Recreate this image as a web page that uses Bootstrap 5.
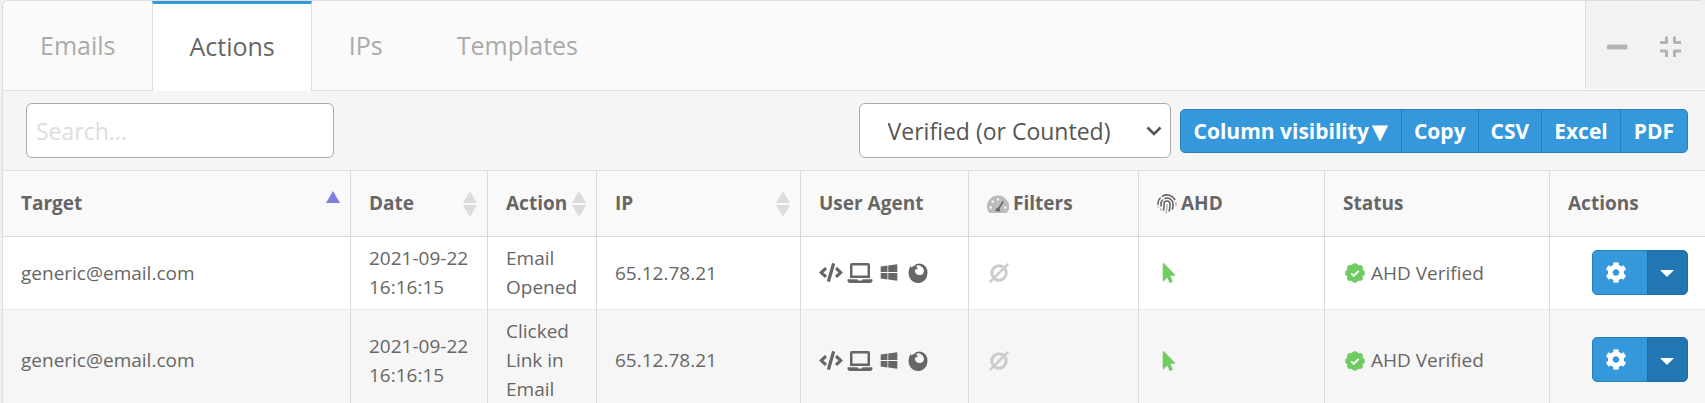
<!DOCTYPE html>
<html lang="en">
<head>
<meta charset="utf-8">
<meta name="viewport" content="width=device-width, initial-scale=1">
<title>Actions</title>
<link href="https://cdn.jsdelivr.net/npm/bootstrap@5.3.0/dist/css/bootstrap.min.css" rel="stylesheet">
<style>
  body { background: #f0f0f0; color: #666; font-family: "Open Sans", sans-serif; font-size: 19px; line-height: 29px; }
  .panel { margin-left: 2px; border: 1px solid #ddd; border-right: 0; border-radius: 6px 6px 0 0; background: #f5f5f5; overflow: hidden; }
  .panel-top { background: #fafafa; border-bottom: 1px solid #ddd; }
  .panel-tabs { --bs-nav-link-color: #aaa; --bs-nav-link-hover-color: #666; margin-bottom: -1px; }
  .panel-tabs .nav-link { height: 90px; padding: 0 37px; font-size: 25px; line-height: 88px; border: 0 solid #ddd; }
  .panel-tabs .nav-link.active { color: #666; background: #fff; border-width: 3px 1px 0; border-top-color: #3498db; padding: 0 36px; line-height: 84px; }
  .panel-tools { background: #f2f2f2; border-left: 1px solid #ddd; color: #b4b4b4; gap: 32px; padding: 3px 24px 0 21px; margin-bottom: 1px; }
  .tool { background: none; border: 0; padding: 0; line-height: 1; color: inherit; }
  .toolbar { padding: 12px 17px 12px 23px; gap: 9px; border-bottom: 1px solid #ddd; }
  .search-box, .filter-box { border: 1px solid #aaa; border-radius: 6px; height: 55px; background-color: #fff; }
  .search-box { width: 308px; padding: 0 9px; font-size: 23px; }
  .search-box::placeholder { color: #ddd; }
  .filter-box { width: 312px; padding: 2px 40px 0 28px; font-size: 23px; color: #555;
    background-image: url("data:image/svg+xml,%3Csvg xmlns='http://www.w3.org/2000/svg' viewBox='0 0 16 10'%3E%3Cpath d='M1.5 1.5 8 8l6.500-6.500' fill='none' stroke='%23555' stroke-width='2.600'/%3E%3C/svg%3E");
    background-size: 16px 10px; background-position: right 8px center; }
  .btn-main { --bs-btn-color: #fff; --bs-btn-bg: #3498db; --bs-btn-border-color: #2980b9; --bs-btn-hover-color: #fff; --bs-btn-hover-bg: #2a8bcb; --bs-btn-hover-border-color: #2980b9; --bs-btn-border-radius: 5px; }
  .export .btn { --bs-btn-padding-x: 12px; --bs-btn-padding-y: 0; --bs-btn-font-size: 21px; --bs-btn-font-weight: 700; --bs-btn-line-height: 42px; }
  .export .btn:first-child, .export .btn:last-child { --bs-btn-padding-x: 13px; }
  .arrow { font-family: "DejaVu Sans", sans-serif; line-height: 1; margin-left: 3px; }
  .log { table-layout: fixed; min-width: 1500px; border-collapse: separate; border-spacing: 0; }
  .log th, .log td { padding: 7px 16px 7px 18px; border-right: 1px solid #d9d9d9; border-bottom: 1px solid #ebebeb; vertical-align: middle; }
  .log th:last-child, .log td:last-child { border-right: 0; padding-right: 17px; }
  .log td:last-child { padding-bottom: 9px; }
  .log th { height: 66px; background: #f9f9f9; border-bottom-color: #d9d9d9; padding-right: 10px; white-space: nowrap; }
  .log th .icon-label { gap: 4px; }
  .log tbody tr { background: #fff; }
  .log tbody tr:nth-child(even) { background: #f6f6f6; }
  .w-date { width: 137px } .w-action { width: 109px } .w-ip { width: 204px } .w-agent { width: 168px }
  .w-filters { width: 170px } .w-ahd { width: 186px } .w-status { width: 225px } .w-menu { width: 155px }
  .agents { gap: 4px; }
  .ok { color: #6fcb62; }
  .row-menu { vertical-align: top; }
  .row-menu .btn { --bs-btn-padding-y: 0; --bs-btn-padding-x: 13px; height: 45px; }
  .row-menu .btn:first-child { width: 56px; }
  .row-menu .btn:last-child { --bs-btn-bg: #2176b3; --bs-btn-border-color: #1f6da5; --bs-btn-padding-x: 12px; width: 41px; }
  svg { display: block; fill: currentColor; flex: none; }
</style>
</head>
<body>
<svg width="0" height="0" class="position-absolute" aria-hidden="true">
  <symbol id="code" viewBox="0 0 640 512"><path d="M278.9 511.5l-61-17.7c-6.4-1.8-10-8.5-8.2-14.9L346.2 8.7c1.8-6.4 8.5-10 14.9-8.2l61 17.7c6.4 1.8 10 8.5 8.2 14.9L293.8 503.3c-1.9 6.4-8.5 10.1-14.9 8.2zm-114-112.2l43.5-46.4c4.6-4.9 4.3-12.7-.8-17.2L117 256l90.6-79.7c5.1-4.5 5.5-12.3.8-17.2l-43.5-46.4c-4.5-4.8-12.1-5.1-17-.5L3.8 247.2c-5.1 4.7-5.1 12.8 0 17.5l144.1 135.1c4.9 4.6 12.5 4.4 17-.5zm327.2.6l144.1-135.1c5.1-4.7 5.1-12.8 0-17.5L492.1 112.1c-4.8-4.5-12.4-4.3-17 .5L431.6 159c-4.6 4.9-4.3 12.7.8 17.2L523 256l-90.6 79.7c-5.1 4.5-5.5 12.3-.8 17.2l43.5 46.4c4.5 4.9 12.1 5.1 17 .6z"/></symbol>
  <symbol id="laptop" viewBox="0 0 640 512"><path d="M624 416H381.540c-.74 19.810-14.710 32-32.740 32H288c-18.690 0-33.020-17.470-32.770-32H16c-8.800 0-16 7.200-16 16v16c0 35.200 28.800 64 64 64h512c35.200 0 64-28.800 64-64v-16c0-8.800-7.200-16-16-16zM576 48c0-26.400-21.600-48-48-48H112C85.600 0 64 21.600 64 48v336h512V48zm-64 272H128V64h384v256z"/></symbol>
  <symbol id="windows" viewBox="0 0 448 512"><path d="M0 93.700l183.600-25.300v177.400H0V93.700zm0 324.600l183.600 25.300V268.400H0v149.900zm203.800 28L448 480V268.400H203.800v177.900zm0-380.600v180.100H448V32L203.800 65.700z"/></symbol>
  <symbol id="firefox" viewBox="0 0 20 20"><path fill-rule="evenodd" d="M2.700 2.700 3.300 4.400Q4.600 3.200 6.200 2.900C7.600 1.300 9.500.5 11.500.5Q16.200 1 18.200 4.400Q20 7.500 19.400 11A9.400 9.400 0 0 1 .6 10.300C.5 7.300 1.500 4.500 2.700 2.700zM10.400 5.200Q9.100 5.200 8.500 6.200L7.100 6.500Q6.700 7.500 7 8.600Q7.800 11.900 11 12.100C14.100 12.200 16 10.200 15.900 7.700C15.700 5 13.700 2.700 10.600 2.200C9.600 2.200 8.800 2.700 8.300 3.400C8.900 4.600 9.800 4.500 10.400 5.200z"/></symbol>
  <symbol id="empty" viewBox="0 0 20 20"><circle cx="10" cy="10" r="7.200" fill="none" stroke="currentColor" stroke-width="3"/><path d="M1.600 18.400 18.400 1.600" stroke="currentColor" stroke-width="2.600" stroke-linecap="round"/></symbol>
  <symbol id="pointer" viewBox="0 0 320 512"><path d="M302.189 329.126H196.105l55.831 135.993c3.889 9.428-.555 19.999-9.444 23.999l-49.165 21.427c-9.165 4-19.443-.571-23.332-9.714l-53.053-129.136-86.664 89.138C18.729 472.710 0 463.554 0 447.977V18.299C0 1.899 19.921-6.096 30.277 5.443l284.412 292.542c11.472 11.179 3.007 31.141-12.500 31.141z"/></symbol>
  <symbol id="verified" viewBox="0 0 20 20"><circle cx="10" cy="10" r="8"/><circle cx="10" cy="3.400" r="3.200"/><circle cx="14.700" cy="5.300" r="3.200"/><circle cx="16.600" cy="10" r="3.200"/><circle cx="14.700" cy="14.700" r="3.200"/><circle cx="10" cy="16.600" r="3.200"/><circle cx="5.300" cy="14.700" r="3.200"/><circle cx="3.400" cy="10" r="3.200"/><circle cx="5.300" cy="5.300" r="3.200"/><path d="m6.200 10.400 2.500 2.400 5-5" fill="none" stroke="#fff" stroke-width="1.900"/></symbol>
  <symbol id="cog" viewBox="16 8 480 496"><path d="M487.400 315.700l-42.600-24.600c4.300-23.200 4.300-47 0-70.200l42.600-24.600c4.900-2.800 7.100-8.600 5.500-14-11.100-35.600-30-67.800-54.700-94.600-3.800-4.100-10-5.100-14.800-2.300L380.800 110c-17.900-15.400-38.500-27.300-60.800-35.100V25.800c0-5.600-3.900-10.500-9.400-11.700-36.700-8.200-74.300-7.800-109.200 0-5.500 1.200-9.400 6.100-9.400 11.700V75c-22.200 7.900-42.800 19.800-60.800 35.100L88.700 85.500c-4.900-2.800-11-1.900-14.800 2.300-24.700 26.700-43.600 58.900-54.700 94.600-1.700 5.400.6 11.200 5.500 14L67.300 221c-4.300 23.200-4.300 47 0 70.200l-42.600 24.600c-4.900 2.800-7.100 8.600-5.500 14 11.100 35.600 30 67.800 54.700 94.600 3.800 4.100 10 5.100 14.800 2.300l42.600-24.600c17.900 15.400 38.500 27.300 60.800 35.100v49.200c0 5.600 3.900 10.500 9.400 11.700 36.700 8.200 74.300 7.800 109.200 0 5.500-1.200 9.400-6.100 9.400-11.700v-49.200c22.200-7.900 42.800-19.800 60.800-35.100l42.600 24.600c4.900 2.800 11 1.900 14.800-2.300 24.700-26.700 43.600-58.900 54.700-94.600 1.500-5.500-.7-11.300-5.600-14.100zM256 336c-44.100 0-80-35.900-80-80s35.900-80 80-80 80 35.900 80 80-35.900 80-80 80z"/></symbol>
  <symbol id="sort" viewBox="0 0 14 28"><path d="M7 1l7 12H0zM0 15h14L7 27z" fill="#dcdcdc"/></symbol>
  <symbol id="sort-up" viewBox="0 0 14 28"><path d="M7 1l7 12H0z" fill="#7b80e0"/></symbol>
</svg>

<main class="panel">
  <header class="panel-top d-flex">
    <ul class="nav panel-tabs flex-grow-1">
      <li class="nav-item"><a class="nav-link" href="#emails">Emails</a></li>
      <li class="nav-item"><a class="nav-link active" aria-current="page" href="#actions">Actions</a></li>
      <li class="nav-item"><a class="nav-link" href="#ips">IPs</a></li>
      <li class="nav-item"><a class="nav-link" href="#templates">Templates</a></li>
    </ul>
    <div class="panel-tools d-flex align-items-center">
      <button class="tool" type="button" aria-label="Collapse"><svg width="21" height="22" viewBox="0 0 21 22"><rect y="8.500" width="20.500" height="5" rx="1.500"/></svg></button>
      <button class="tool" type="button" aria-label="Exit full screen"><svg width="21" height="22" viewBox="0 0 21 22"><path d="M0 6.500h6.500V.5M14.500.5v6H21M0 15h6.500v6M14.500 21v-6H21" fill="none" stroke="currentColor" stroke-width="3" stroke-linejoin="round"/></svg></button>
    </div>
  </header>

  <div class="toolbar d-flex align-items-center flex-wrap">
    <input type="search" class="form-control search-box me-auto" placeholder="Search..." aria-label="Search">
    <select class="form-select filter-box" aria-label="Status filter"><option>Verified (or Counted)</option></select>
    <div class="btn-group export">
      <button type="button" class="btn btn-main">Column visibility<span class="arrow">▼</span></button>
      <button type="button" class="btn btn-main">Copy</button>
      <button type="button" class="btn btn-main">CSV</button>
      <button type="button" class="btn btn-main">Excel</button>
      <button type="button" class="btn btn-main">PDF</button>
    </div>
  </div>

  <table class="log w-100">
    <colgroup><col><col class="w-date"><col class="w-action"><col class="w-ip"><col class="w-agent"><col class="w-filters"><col class="w-ahd"><col class="w-status"><col class="w-menu"></colgroup>
    <thead>
      <tr>
        <th scope="col" aria-sort="ascending"><div class="d-flex justify-content-between align-items-center">Target<svg width="14" height="28"><use href="#sort-up"/></svg></div></th>
        <th scope="col"><div class="d-flex justify-content-between align-items-center">Date<svg width="14" height="28"><use href="#sort"/></svg></div></th>
        <th scope="col"><div class="d-flex justify-content-between align-items-center">Action<svg width="14" height="28"><use href="#sort"/></svg></div></th>
        <th scope="col"><div class="d-flex justify-content-between align-items-center">IP<svg width="14" height="28"><use href="#sort"/></svg></div></th>
        <th scope="col">User Agent</th>
        <th scope="col"><div class="d-flex align-items-center icon-label"><svg width="22" height="20" viewBox="0 0 22 20"><path d="M11 1.500a11 11 0 0 0-9.500 16.700q.4.800 1.500.8h16q1.100 0 1.500-.8A11 11 0 0 0 11 1.500z" fill="#bcbcbc"/><g fill="#f9f9f9"><circle cx="11" cy="5.500" r="1.200"/><circle cx="5.700" cy="7.700" r="1.200"/><circle cx="3.700" cy="13.500" r="1.200"/><circle cx="18.300" cy="13.500" r="1.200"/></g><path d="M16 7.800l-4.500 6.700" stroke="#666" stroke-width="1.500" stroke-linecap="round"/><path d="M8.600 17.200a2.400 2.400 0 1 1 4.600 0z"/></svg>Filters</div></th>
        <th scope="col"><div class="d-flex align-items-center icon-label"><svg width="20" height="20" viewBox="0 0 20 20"><g fill="none" stroke-width="1.600" stroke-linecap="round" stroke="#666"><path d="M1 10.500V9a8.600 8.600 0 0 1 2.200-5M5.500 2.200A8.800 8.800 0 0 1 17.800 5.500M4 12V10a6 6 0 0 1 1.500-4M8 4.400a6 6 0 0 1 8 5.600q0 3-.5 5M6.500 16q.6-2.500.5-6a3 3 0 0 1 6 0q.1 4-.8 7"/><path stroke="#bcbcbc" d="M19 8.500v3M1 13h.5M4 15l-.3 1M10 10.500q0 5-1 8.500"/></g></svg>AHD</div></th>
        <th scope="col">Status</th>
        <th scope="col">Actions</th>
      </tr>
    </thead>
    <tbody>
      <tr>
        <td>generic@email.com</td>
        <td>2021-09-22 16:16:15</td>
        <td>Email Opened</td>
        <td>65.12.78.21</td>
        <td><div class="d-flex agents"><svg width="24" height="19"><use href="#code"/></svg><svg width="26" height="20"><use href="#laptop"/></svg><svg width="24" height="19"><use href="#windows"/></svg><svg width="26" height="20"><use href="#firefox"/></svg></div></td>
        <td><svg width="24" height="20" color="#ccc"><use href="#empty"/></svg></td>
        <td><svg class="ok" width="24" height="20"><use href="#pointer"/></svg></td>
        <td><div class="d-flex align-items-center gap-1"><svg class="ok" width="24" height="20"><use href="#verified"/></svg>AHD Verified</div></td>
        <td class="text-end"><div class="btn-group row-menu"><button type="button" class="btn btn-main" aria-label="Settings"><svg width="20" height="21"><use href="#cog"/></svg></button><button type="button" class="btn btn-main" aria-label="More actions"><svg width="14" height="10" viewBox="0 0 14 10"><path d="M0 3h14L7 10z"/></svg></button></div></td>
      </tr>
      <tr>
        <td>generic@email.com</td>
        <td>2021-09-22 16:16:15</td>
        <td>Clicked Link in Email</td>
        <td>65.12.78.21</td>
        <td><div class="d-flex agents"><svg width="24" height="19"><use href="#code"/></svg><svg width="26" height="20"><use href="#laptop"/></svg><svg width="24" height="19"><use href="#windows"/></svg><svg width="26" height="20"><use href="#firefox"/></svg></div></td>
        <td><svg width="24" height="20" color="#ccc"><use href="#empty"/></svg></td>
        <td><svg class="ok" width="24" height="20"><use href="#pointer"/></svg></td>
        <td><div class="d-flex align-items-center gap-1"><svg class="ok" width="24" height="20"><use href="#verified"/></svg>AHD Verified</div></td>
        <td class="text-end"><div class="btn-group row-menu"><button type="button" class="btn btn-main" aria-label="Settings"><svg width="20" height="21"><use href="#cog"/></svg></button><button type="button" class="btn btn-main" aria-label="More actions"><svg width="14" height="10" viewBox="0 0 14 10"><path d="M0 3h14L7 10z"/></svg></button></div></td>
      </tr>
    </tbody>
  </table>
</main>
<script src="https://cdn.jsdelivr.net/npm/bootstrap@5.3.0/dist/js/bootstrap.bundle.min.js"></script>
</body>
</html>
